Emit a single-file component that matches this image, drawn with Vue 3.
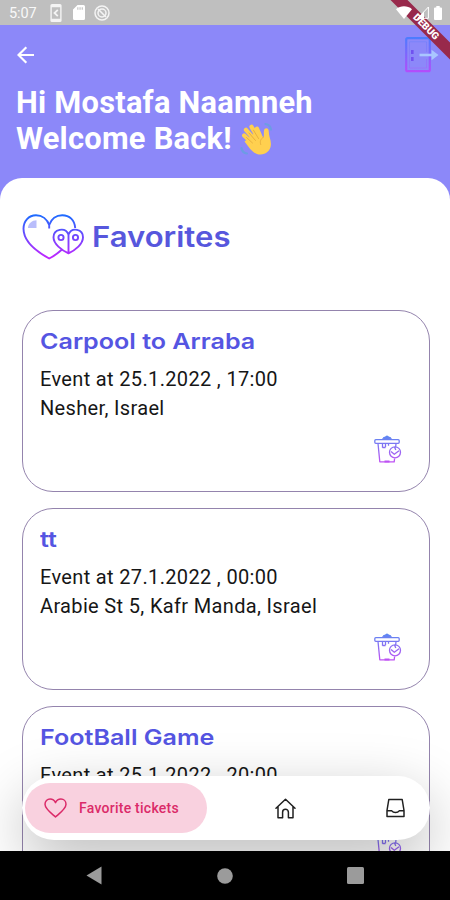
<template>
  <div class="phone">
    <!-- shared gradients for the outline icons -->
    <svg class="defs" width="0" height="0">
      <defs>
        <linearGradient id="neon" gradientUnits="userSpaceOnUse" x1="0" y1="0" x2="0" y2="46">
          <stop offset="0" stop-color="#1a6dff"/>
          <stop offset="1" stop-color="#c822ff"/>
        </linearGradient>
        <linearGradient id="neonBin" gradientUnits="userSpaceOnUse" x1="0" y1="0" x2="0" y2="29">
          <stop offset="0" stop-color="#5a8af2"/>
          <stop offset="1" stop-color="#c64df3"/>
        </linearGradient>
        <linearGradient id="neonDoor" gradientUnits="userSpaceOnUse" x1="0" y1="0" x2="0" y2="35">
          <stop offset="0" stop-color="#4a7dff"/>
          <stop offset="1" stop-color="#b44cfb"/>
        </linearGradient>
      </defs>
    </svg>

    <div class="status-bar">
      <span class="status-time">5:07</span>
      <svg class="status-phone" width="12" height="18" viewBox="0 0 12 18">
        <path fill="#f4f4f4" fill-rule="evenodd" d="M2 0h8a1.600 1.600 0 0 1 1.600 1.600v14.800a1.600 1.600 0 0 1-1.600 1.600H2a1.600 1.600 0 0 1-1.600-1.600V1.600A1.600 1.600 0 0 1 2 0zM1.800 3.200v11.600h8.400V3.200z"/>
        <path d="M7.800 5.800 4.500 9l3.300 3.200" fill="none" stroke="#f4f4f4" stroke-width="1.800"/>
      </svg>
      <svg class="status-sd" width="12" height="15" viewBox="0 0 12 15">
        <path fill="#fff" fill-rule="evenodd" d="M4.500 0H10.500A1.500 1.500 0 0 1 12 1.500v12A1.500 1.500 0 0 1 10.500 15h-9A1.500 1.500 0 0 1 0 13.500V4.500zM4.300 2.200v2.600h1.100V2.200zM6.500 2.200v2.600h1.100V2.200zM8.700 2.200v2.600h1.100V2.200z"/>
      </svg>
      <svg class="status-block" width="16" height="16" viewBox="0 0 16 16" fill="none" stroke="#f4f4f4">
        <circle cx="8" cy="8" r="7" stroke-width="1.500"/>
        <circle cx="8" cy="8" r="4" stroke-width="1.500"/>
        <path d="M4 4l8 8" stroke-width="1.600"/>
      </svg>
      <div class="status-right">
        <svg width="16" height="13" viewBox="0 0 16 13"><path d="M0 3.200C4.600-.6 11.400-.6 16 3.200L8 13z" fill="#fff"/></svg>
        <svg width="12" height="13" viewBox="0 0 12 13"><path d="M11.400 1v11.300H.8z" fill="none" stroke="#fff" stroke-width="1"/><path d="M7 5.500V13H0z" fill="#fff"/></svg>
        <svg width="8" height="14" viewBox="0 0 8 14"><path d="M2.300 0h3.400v1.500H7A1 1 0 0 1 8 2.500V13a1 1 0 0 1-1 1H1a1 1 0 0 1-1-1V2.500a1 1 0 0 1 1-1h1.300z" fill="#fff"/></svg>
      </div>
    </div>

    <div class="header">
      <div class="header-actions">
        <svg class="back" width="18" height="18" viewBox="0 0 18 18" fill="none" stroke="#fff" stroke-width="2.200"><path d="M17 9H2M9.300 1.200 1.500 9l7.800 7.800"/></svg>
        <svg class="logout" width="34" height="36" viewBox="0 0 34 36" fill="none">
          <rect x="1.200" y="1.200" width="23.600" height="33" rx="1.500" stroke="url(#neonDoor)" stroke-width="2.200"/>
          <path d="M4.500 31V4.800h17V15M21.500 22v9h-17" stroke="url(#neonDoor)" stroke-width="1" opacity=".35"/>
          <path d="M7.300 13v11" stroke="#7052f0" stroke-width="2.600" stroke-dasharray="4 3"/>
          <path d="M14.500 18h13" stroke="#a9c6ff" stroke-width="2.600"/>
          <path d="M26.500 12.800 33.500 18l-7 5.200z" fill="#a9c6ff"/>
        </svg>
      </div>
      <h1 class="greeting">Hi Mostafa Naamneh<br>Welcome Back!
        <svg class="wave" width="33" height="34" viewBox="0 0 33 34" fill="none" stroke-linecap="round">
          <path d="M25.500 2c3 .5 5 2.500 5.500 5.500M1.500 26c.5 3 2.500 5.200 5.500 5.500" stroke="#62a3dc" stroke-width="2.200" opacity=".75"/>
          <path d="M12 21 4.200 13.500M15 18 6 7.800M18 16 11.500 4.800M21 16 17 6.800" stroke="#ffd04f" stroke-width="4.300"/>
          <path d="M24.500 7c2.700-2 4.400.3 4.300 2.800-.1 4.500 2.400 8.200 2.100 13-.4 6-5 9.700-10.400 9.700-4.500 0-7.700-2.500-10.300-5.500L4.500 19.500 14 11.500l7 2.500 2.500 1.500c.9-2.500-.3-6.200 1-8.500z" fill="#ffd04f"/>
          <path d="m6.500 15.500 6 5.500M9 11l6.500 7.500M13.500 8.200l5 8.300M23.500 15c-3 2-3.800 4.500-2.800 7.500" stroke="#e2a83a" stroke-width=".8"/>
        </svg>
      </h1>
    </div>

    <div class="sheet">
      <div class="section-head">
        <svg class="hearts" width="62" height="46" viewBox="0 0 62 46" fill="none" stroke="url(#neon)" stroke-width="1.900">
          <path d="M40 35.500c-4.500 4-8.500 7-12.800 9C18 39.500 1.500 29 1.500 14.800 1.500 7 6.800 1.200 14 1.200c6.200 0 11.200 4 13.200 9.800v3.500V11c2-6 7-9.800 13-9.800 7.300 0 12.500 5 13 12.800"/>
          <path d="M46.500 39.300C39.500 36 31.500 30 31.500 23.300c0-8 11.500-10.800 15-2.800 3.500-8 14.500-5.200 14.500 2.800 0 6.700-7.500 12.700-14.500 16zM46.500 20.500v18"/>
          <circle cx="39" cy="23.500" r="2.600"/>
          <circle cx="53.500" cy="23.500" r="2.600"/>
          <path d="M6 13.500c.3-4 4-7.200 8.500-7.300V14H6z" fill="#b9bdfb" stroke="none"/>
        </svg>
        <h2 class="section-title">Favorites</h2>
      </div>

      <div class="ticket-list">
        <div v-for="ticket in tickets" :key="ticket.id" class="ticket">
          <h3 class="ticket-title">{{ ticket.title }}</h3>
          <p class="ticket-line">Event at {{ ticket.date }} , {{ ticket.time }}</p>
          <p class="ticket-line">{{ ticket.place }}</p>
          <svg class="ticket-bin" width="28" height="29" viewBox="0 0 28 29" fill="none" stroke="url(#neonBin)" stroke-width="1.300" stroke-linejoin="round">
            <path d="M8.500 4.500C9 2.500 11 2 13 1.200c2 .8 4 1.300 4.500 3.300"/>
            <path d="M9.500 3.300h7" stroke-width="2.600"/>
            <rect x=".8" y="4.700" width="24.400" height="3.600" rx="1"/>
            <path d="M4 8.500 5.800 26.800h14.400l.4-3.300M22 8.500l-.4 4"/>
            <path d="M8.500 8.500v4.300M11.500 8.500v3.800M14.500 8.500v2.300M8.500 12.500h3"/>
            <path d="M10.500 26.500h5" stroke-width="2"/>
            <circle cx="21" cy="17.300" r="5.500"/>
            <path d="m17 16.500 3.300 2.800 4.700-3.500M20.500 12l1.300 3"/>
          </svg>
        </div>
      </div>
    </div>

    <div class="tab-bar">
      <button class="tab tab--active">
        <svg width="23" height="20" viewBox="0 0 23 20" fill="none" stroke="#db2b69" stroke-width="1.500" stroke-linejoin="round"><path d="M11.500 19C7 15 1 10.700 1 6.200 1 3.200 3.200 1 6.100 1c2.400 0 4.300 1.300 5.400 3.600C12.600 2.300 14.500 1 16.900 1 19.800 1 22 3.200 22 6.200c0 4.500-6 8.800-10.500 12.800z"/></svg>
        <span>Favorite tickets</span>
      </button>
      <button class="tab tab--home">
        <svg width="21" height="21" viewBox="0 0 21 21" fill="none" stroke="#202020" stroke-width="1.500" stroke-linejoin="round" stroke-linecap="round"><path d="M1 10.300 10.500 1.300l9.500 9M3 8.800V19.800h4.600v-5.600c0-3.900 5.800-3.900 5.800 0v5.600H18V8.800"/></svg>
      </button>
      <button class="tab tab--inbox">
        <svg width="19" height="20" viewBox="0 0 19 20" fill="none" stroke="#202020" stroke-width="1.500" stroke-linejoin="round"><path d="M2.800 1.500h13.400L18 12.500v6H1v-6zM1.200 12.800h4.600c1.600 2.400 5.800 2.400 7.400 0h4.600"/></svg>
      </button>
    </div>

    <div class="system-nav">
      <svg width="16" height="19" viewBox="0 0 16 19"><path d="M15.500.5v18L.5 9.500z" fill="#9b9b9b"/></svg>
      <svg width="16" height="16" viewBox="0 0 16 16"><circle cx="8" cy="8" r="7.800" fill="#9b9b9b"/></svg>
      <svg width="17" height="17" viewBox="0 0 17 17"><rect width="17" height="17" rx="1.500" fill="#9b9b9b"/></svg>
    </div>

    <div class="debug-banner">DEBUG</div>
  </div>
</template>

<script setup>
import { ref } from 'vue'

const tickets = ref([
  { id: 1, title: 'Carpool to Arraba', date: '25.1.2022', time: '17:00', place: 'Nesher, Israel' },
  { id: 2, title: 'tt', date: '27.1.2022', time: '00:00', place: 'Arabie St 5, Kafr Manda, Israel' },
  { id: 3, title: 'FootBall Game', date: '25.1.2022', time: '20:00', place: '' }
])
</script>

<style>
body {
  margin: 0;
}
</style>

<style scoped>
.phone {
  position: relative;
  display: flex;
  flex-direction: column;
  width: 450px;
  height: 900px;
  overflow: hidden;
  background: #8c88f9;
  font-family: Roboto, sans-serif;
}
.defs {
  position: absolute;
}
.status-bar {
  flex: none;
  display: flex;
  align-items: center;
  height: 25px;
  padding: 0 8px 0 9px;
  background: #bfbfbf;
}
.status-time {
  width: 41px;
  color: #f8f8f8;
  font-size: 14.5px;
  letter-spacing: -0.1px;
  padding-top: 2px;
}
.status-sd {
  margin-left: 11px;
}
.status-block {
  margin-left: 9px;
}
/* the icons are drawn over the debug ribbon */
.status-right {
  position: relative;
  z-index: 2;
  display: flex;
  gap: 5px;
  margin-left: auto;
}
.header {
  flex: none;
  height: 153px;
}
.header-actions {
  display: flex;
  justify-content: space-between;
  align-items: center;
  height: 60px;
  padding: 0 11px 0 17px;
}
.greeting {
  margin: 0 0 0 16px;
  color: #fff;
  font-size: 30.8px;
  line-height: 36px;
  font-weight: 700;
  letter-spacing: 0.25px;
}
.wave {
  vertical-align: -7px;
}
.sheet {
  flex: 1;
  min-height: 0;
  padding: 36px 20px 0 22px;
  border-radius: 22px 22px 0 0;
  background: #fff;
  overflow: hidden;
}
.section-head {
  display: flex;
  align-items: center;
  height: 46px;
  margin-bottom: 50px;
}
.section-title {
  margin: 0 0 0 8px;
  color: #5757dd;
  font-family: Inter, sans-serif;
  font-size: 28px;
  font-weight: 600;
  transform: scaleX(1.11);
  transform-origin: left;
}
.ticket-list {
  display: flex;
  flex-direction: column;
  gap: 16px;
}
.ticket {
  position: relative;
  box-sizing: border-box;
  height: 182px;
  padding: 16px 17px;
  border: 1px solid #9484ad;
  border-radius: 31px;
}
.ticket-title {
  margin: 0 0 9px;
  color: #5555e2;
  font-family: Inter, sans-serif;
  font-size: 22px;
  line-height: 29px;
  font-weight: 600;
  transform: scaleX(1.14);
  transform-origin: left;
}
.ticket-line {
  margin: 0;
  color: #161616;
  font-size: 20px;
  line-height: 29px;
  letter-spacing: 0.34px;
  white-space: nowrap;
}
.ticket-bin {
  position: absolute;
  right: 27px;
  bottom: 27px;
}
.tab-bar {
  position: absolute;
  left: 22px;
  top: 776px;
  box-sizing: border-box;
  display: flex;
  align-items: center;
  width: 408px;
  height: 64px;
  padding: 0 25px 0 3px;
  border-radius: 32px;
  background: #fff;
  box-shadow: 0 20px 60px rgba(0, 0, 0, 0.28);
}
.tab {
  display: flex;
  align-items: center;
  padding: 0;
  border: none;
  background: none;
}
.tab--active {
  width: 182px;
  height: 50px;
  padding-left: 19px;
  gap: 12px;
  border-radius: 25px;
  background: #f9d1df;
  color: #db2b69;
  font-family: Roboto, sans-serif;
  font-size: 14px;
  font-weight: 500;
  letter-spacing: 0.25px;
  white-space: nowrap;
}
.tab--home {
  margin-left: 68px;
}
.tab--inbox {
  margin-left: auto;
}
.system-nav {
  position: relative;
  flex: none;
  display: flex;
  align-items: center;
  justify-content: space-between;
  height: 49px;
  padding: 0 86px;
  background: #000;
}
.debug-banner {
  position: absolute;
  top: 21px;
  right: -36px;
  width: 120px;
  height: 12px;
  background: #98294b;
  color: #fff;
  font-size: 10px;
  line-height: 12px;
  font-weight: 900;
  text-align: center;
  transform: rotate(45deg);
}
</style>
